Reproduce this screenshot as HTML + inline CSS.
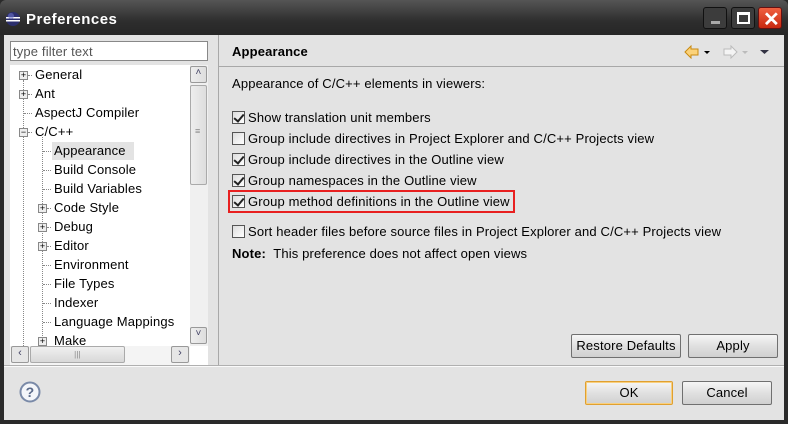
<!DOCTYPE html>
<html><head><style>
*{margin:0;padding:0;box-sizing:border-box}
body{width:788px;height:424px;background:#2a2a2a;font-family:"Liberation Sans",sans-serif;font-size:13px;letter-spacing:0.15px;color:#000;position:relative;overflow:hidden}
.abs{position:absolute}
#title{left:0;top:0;width:788px;height:35px;background:linear-gradient(#555,#2e2e2e 60%,#262626);border-radius:6px 6px 0 0}
#client{left:4px;top:35px;width:780px;height:385px;background:#e3e3e3}
.t{position:absolute;white-space:nowrap}
.btn{position:absolute;border:1px solid #707070;border-radius:2px;background:linear-gradient(#f6f6f6,#e0e0e0 50%,#d0d0d0);text-align:center;line-height:21px;font-size:13px}
.cb{position:absolute;width:13px;height:13px;border:1px solid #555;background:linear-gradient(135deg,#ddd,#fff)}
.cb.c::after{content:"";position:absolute;left:3px;top:0px;width:4px;height:8px;border:solid #222;border-width:0 2px 2px 0;transform:rotate(40deg)}
.pm{position:absolute;width:9px;height:9px;border:1px solid #888;background:#eee;font-size:9px;line-height:7px;text-align:center;letter-spacing:0}
.dotv{position:absolute;border-left:1px dotted #888}
.doth{position:absolute;border-top:1px dotted #888;width:8px}
</style></head><body>
<div id="title" class="abs"></div>
<svg class="abs" style="left:5px;top:11px" width="16" height="16"><circle cx="8" cy="8" r="7" fill="#2c2f6e"/><rect x="1" y="6" width="14" height="1.5" fill="#fff"/><rect x="1" y="9" width="14" height="1.5" fill="#fff"/><circle cx="6" cy="5" r="3" fill="#6c73c8" opacity=".6"/></svg>
<div class="t" style="left:26px;top:11px;color:#fff;font-weight:bold;font-size:15px;letter-spacing:.5px">Preferences</div>
<div class="abs" style="left:703px;top:7px;width:24px;height:22px;border:1px solid #111;border-radius:3px;background:#3c3c3c"><div class="abs" style="left:7px;top:13px;width:9px;height:3px;background:#aaa"></div></div>
<div class="abs" style="left:731px;top:7px;width:24px;height:22px;border:1px solid #111;border-radius:3px;background:#3c3c3c"><div class="abs" style="left:5px;top:4px;width:13px;height:12px;border:2px solid #fff;border-top-width:3px"></div></div>
<div class="abs" style="left:758px;top:7px;width:24px;height:22px;border:1px solid #611;border-radius:3px;background:linear-gradient(#f06040,#c82810)"><div class="t" style="left:4px;top:-1px;color:#fff;font-size:20px;font-weight:bold">✕</div></div>
<div id="client" class="abs"></div>
<div class="abs" style="left:10px;top:41px;width:198px;height:20px;background:#fff;border:1px solid #888"></div>
<div class="t" style="left:13px;top:44px;color:#555">type filter text</div>
<div class="abs" style="left:10px;top:65px;width:198px;height:300px;background:#fff"></div>
<div class="abs" style="left:190px;top:65px;width:18px;height:281px;background:#f0f0f0"></div>
<div class="abs" style="left:190px;top:66px;width:17px;height:17px;border:1px solid #999;border-radius:2px;background:linear-gradient(90deg,#eee,#ddd);font-size:10px;text-align:center;color:#446">˄</div>
<div class="abs" style="left:190px;top:85px;width:17px;height:100px;border:1px solid #aaa;border-radius:2px;background:linear-gradient(90deg,#eee,#ddd)"><div class="t" style="left:4px;top:40px;color:#888;font-size:9px">≡</div></div>
<div class="abs" style="left:190px;top:327px;width:17px;height:17px;border:1px solid #999;border-radius:2px;background:linear-gradient(90deg,#eee,#ddd);font-size:10px;text-align:center;color:#446">˅</div>
<div class="abs" style="left:10px;top:346px;width:180px;height:19px;background:#f4f4f4"></div>
<div class="abs" style="left:11px;top:346px;width:18px;height:17px;border:1px solid #999;border-radius:2px;background:#e6e6e6;text-align:center;font-size:11px;color:#446">‹</div>
<div class="abs" style="left:30px;top:346px;width:95px;height:17px;border:1px solid #aaa;border-radius:2px;background:linear-gradient(#f0f0f0,#d8d8d8);text-align:center;font-size:8px;color:#888;line-height:15px">|||</div>
<div class="abs" style="left:171px;top:346px;width:18px;height:17px;border:1px solid #999;border-radius:2px;background:#e6e6e6;text-align:center;font-size:11px;color:#446">›</div>
<div class="abs" style="left:218px;top:35px;width:1px;height:330px;background:#a8a8a8"></div>
<div class="dotv" style="left:23px;top:80px;height:266px"></div>
<div class="dotv" style="left:42px;top:137px;height:209px"></div>
<div class="pm" style="left:19px;top:71px">+</div><div class="doth" style="left:28px;top:75px;width:4px"></div><div class="t" style="left:35px;top:67px">General</div>
<div class="pm" style="left:19px;top:90px">+</div><div class="doth" style="left:28px;top:94px;width:4px"></div><div class="t" style="left:35px;top:86px">Ant</div>
<div class="doth" style="left:24px;top:113px"></div><div class="t" style="left:35px;top:105px">AspectJ Compiler</div>
<div class="pm" style="left:19px;top:128px">−</div><div class="doth" style="left:28px;top:132px;width:4px"></div><div class="t" style="left:35px;top:124px">C/C++</div>
<div class="abs" style="left:52px;top:142px;width:82px;height:18px;background:#e3e3e3"></div>
<div class="doth" style="left:43px;top:151px"></div><div class="t" style="left:54px;top:143px">Appearance</div>
<div class="doth" style="left:43px;top:170px"></div><div class="t" style="left:54px;top:162px">Build Console</div>
<div class="doth" style="left:43px;top:189px"></div><div class="t" style="left:54px;top:181px">Build Variables</div>
<div class="pm" style="left:38px;top:204px">+</div><div class="doth" style="left:47px;top:208px;width:4px"></div><div class="t" style="left:54px;top:200px">Code Style</div>
<div class="pm" style="left:38px;top:223px">+</div><div class="doth" style="left:47px;top:227px;width:4px"></div><div class="t" style="left:54px;top:219px">Debug</div>
<div class="pm" style="left:38px;top:242px">+</div><div class="doth" style="left:47px;top:246px;width:4px"></div><div class="t" style="left:54px;top:238px">Editor</div>
<div class="doth" style="left:43px;top:265px"></div><div class="t" style="left:54px;top:257px">Environment</div>
<div class="doth" style="left:43px;top:284px"></div><div class="t" style="left:54px;top:276px">File Types</div>
<div class="doth" style="left:43px;top:303px"></div><div class="t" style="left:54px;top:295px">Indexer</div>
<div class="doth" style="left:43px;top:322px"></div><div class="t" style="left:54px;top:314px">Language Mappings</div>
<div class="abs" style="left:10px;top:333px;width:180px;height:13px;overflow:hidden"><div class="pm" style="left:28px;top:4px">+</div><div class="t" style="left:44px;top:0px">Make</div></div>
<div class="t" style="left:232px;top:44px;font-weight:bold;font-size:13px">Appearance</div>
<div class="abs" style="left:219px;top:66px;width:565px;height:1px;background:#a8a8a8"></div>
<svg class="abs" style="left:684px;top:45px" width="90" height="14"><path d="M1 7 L7 1 V4 H14 V10 H7 V13 Z" fill="#fbd27a" stroke="#c88a10"/><path d="M20 6h6l-3 3z" fill="#000"/><path d="M53 7 L47 1 V4 H40 V10 H47 V13 Z" fill="#f4f4f4" stroke="#bbb"/><path d="M58 6h6l-3 3z" fill="#bbb"/><path d="M76 5h9l-4.5 4z" fill="#334"/></svg>
<div class="t" style="left:232px;top:76px">Appearance of C/C++ elements in viewers:</div>
<div class="cb c" style="left:232px;top:111px"></div><div class="t" style="left:248px;top:110px">Show translation unit members</div>
<div class="cb" style="left:232px;top:132px"></div><div class="t" style="left:248px;top:131px">Group include directives in Project Explorer and C/C++ Projects view</div>
<div class="cb c" style="left:232px;top:153px"></div><div class="t" style="left:248px;top:152px">Group include directives in the Outline view</div>
<div class="cb c" style="left:232px;top:174px"></div><div class="t" style="left:248px;top:173px">Group namespaces in the Outline view</div>
<div class="abs" style="left:228px;top:190px;width:287px;height:23px;border:2px solid #e82020"></div>
<div class="cb c" style="left:232px;top:195px"></div><div class="t" style="left:248px;top:194px">Group method definitions in the Outline view</div>
<div class="cb" style="left:232px;top:225px"></div><div class="t" style="left:248px;top:224px">Sort header files before source files in Project Explorer and C/C++ Projects view</div>
<div class="t" style="left:232px;top:246px"><b>Note:</b>&nbsp; This preference does not affect open views</div>
<div class="btn" style="left:571px;top:334px;width:110px;height:24px">Restore Defaults</div>
<div class="btn" style="left:688px;top:334px;width:90px;height:24px">Apply</div>
<div class="abs" style="left:4px;top:365px;width:780px;height:1px;background:#b0b0b0"></div>
<div class="abs" style="left:4px;top:366px;width:780px;height:1px;background:#fafafa"></div>
<svg class="abs" style="left:19px;top:381px" width="22" height="22"><circle cx="11" cy="11" r="9.5" fill="#f4f6fa" stroke="#7a8aa8" stroke-width="2"/><text x="11" y="16" text-anchor="middle" font-family="Liberation Sans" font-weight="bold" font-size="14" fill="#5a6a8a">?</text></svg>
<div class="btn" style="left:585px;top:381px;width:88px;height:24px;border-color:#e0a030;box-shadow:inset 0 0 0 1px #f8d080">OK</div>
<div class="btn" style="left:682px;top:381px;width:90px;height:24px">Cancel</div>
</body></html>
